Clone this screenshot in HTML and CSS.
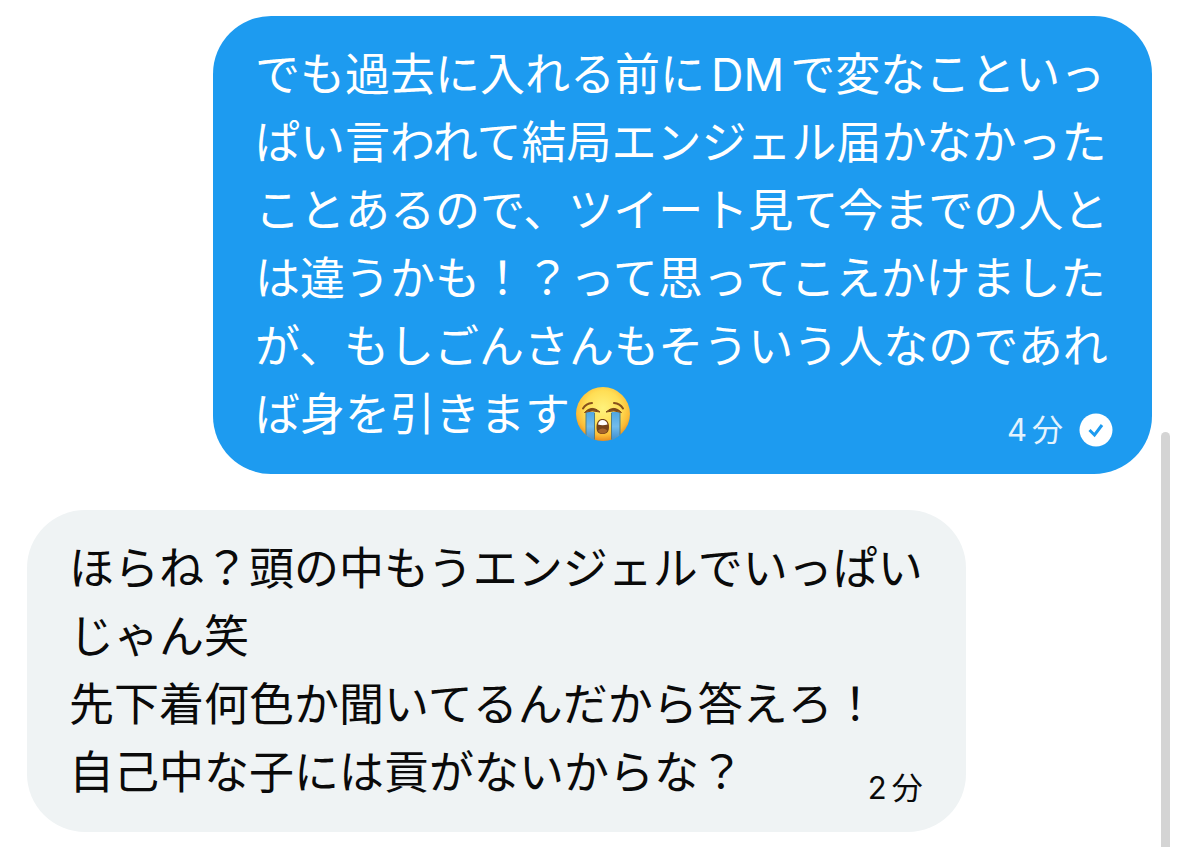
FILE: index.html
```html
<!DOCTYPE html>
<html lang="ja">
<head>
  <meta charset="UTF-8">
  <meta name="viewport" content="width=device-width, initial-scale=1.0">
  <title>メッセージ</title>
  <link rel="stylesheet" href="styles.css">
</head>
<body>
  <main class="chat">
    <div class="bubble sent">
      <p class="text">でも過去に入れる前に<span class="latin">DM</span>で変なこといっ<br>ぱい言われて結局エンジェル届かなかった<br>ことあるので、ツイート見て今までの人と<br>は違うかも！？って思ってこえかけました<br>が、もしごんさんもそういう人なのであれ<br>ば身を引きます<svg class="emoji" viewBox="0 0 56 56" role="img" aria-label="大泣き">
        <defs>
          <radialGradient id="face" cx="50%" cy="40%" r="60%">
            <stop offset="0" stop-color="#fff27c"/>
            <stop offset="0.55" stop-color="#ffde55"/>
            <stop offset="0.82" stop-color="#fcbc36"/>
            <stop offset="1" stop-color="#e88d20"/>
          </radialGradient>
          <linearGradient id="tear" x1="0" y1="0" x2="0" y2="1">
            <stop offset="0" stop-color="#4fa6e2"/>
            <stop offset="0.5" stop-color="#72bcec"/>
            <stop offset="1" stop-color="#388bd0"/>
          </linearGradient>
          <clipPath id="head"><circle cx="28" cy="28" r="27"/></clipPath>
        </defs>
        <circle cx="28" cy="28" r="27" fill="url(#face)"/>
        <g clip-path="url(#head)">
          <path d="M11 26h8.500v29h-8.500zM36.500 26h8.500v29h-8.500z" fill="url(#tear)"/>
          <path d="M11 27v28M19.500 27v28M36.500 27v28M45 27v28" stroke="#557f80" stroke-width="1" fill="none"/>
        </g>
        <g fill="none" stroke="#87501c" stroke-width="2" stroke-linecap="round">
          <path d="M8 22.500Q11 17.500 17 17M48 22.500Q45 17.500 39 17"/>
        </g>
        <path d="M9.500 26.500Q17 18.500 25 26Q17 23.500 9.500 26.500zM31 26Q39 18.500 46.500 26.500Q39 23.500 31 26z" fill="#7c4818" stroke="#7c4818" stroke-width="1" stroke-linejoin="round"/>
        <path d="M21.500 41C21.500 35.500 24 33 27.500 33S34 35.500 34 41C34 45.500 32 48 27.500 48S21.500 45.500 21.500 41z" fill="#75431a"/>
        <path d="M23 38.500C23.500 35.500 25 34 27.500 34S32 35.500 32.500 38.500Q27.500 40 23 38.500z" fill="#fff"/>
        <path d="M23 44.500Q27.500 40.500 32.500 44.500Q31 47.500 27.500 47.500T23 44.500z" fill="#a5642c"/>
      </svg></p>
      <div class="meta">
        <time>4<span class="unit">分</span></time>
        <svg class="check" viewBox="0 0 34 34" role="img" aria-label="送信済み">
          <circle cx="17" cy="17" r="16.500" fill="#fff"/>
          <path d="M10.500 17l5 5 7.500-10" fill="none" stroke="#1d9bf0" stroke-width="3"/>
        </svg>
      </div>
    </div>

    <div class="bubble received">
      <p class="text">ほらね？頭の中もうエンジェルでいっぱい<br>じゃん笑<br>先下着何色か聞いてるんだから答えろ！<br>自己中な子には貢がないからな？</p>
      <div class="meta">
        <time>2<span class="unit">分</span></time>
      </div>
    </div>
  </main>
  <div class="scroll-thumb"></div>
</body>
</html>
```
FILE: styles.css
```css
* { box-sizing: border-box; }

body {
  margin: 0;
  background: #fff;
  color: #0a0a0a;
  font-family: Inter, "Noto Sans CJK JP", sans-serif;
}

.chat {
  display: flex;
  flex-direction: column;
  gap: 36px;
  padding: 16px 27px 14px;
}

/* text and time share one cell so the time sits beside the last line */
.bubble {
  display: grid;
  padding: 25px 42px;
  border-radius: 58px;
}

.sent {
  margin-left: 186px;
  padding-right: 39px;
  background: #1d9bf0;
  color: #fff;
}

.received {
  margin-right: 186px;
  padding-right: 46px;
  background: #eff3f4;
}

.text,
.meta {
  grid-area: 1 / 1;
}

.text {
  margin: 0;
  font-size: 45px;
  line-height: 68px;
  white-space: nowrap;
}

.latin {
  padding: 0 6px;
}

.emoji {
  width: 56px;
  height: 56px;
  margin-left: 5px;
  vertical-align: -11px;
}

.meta {
  display: flex;
  align-items: center;
  align-self: end;
  justify-self: end;
  gap: 16px;
  font-size: 31px;
  line-height: 38px;
}

.sent .meta {
  color: #e4f3fd;
}

.unit {
  margin-left: 5px;
}

.check {
  width: 34px;
  height: 34px;
}

.scroll-thumb {
  position: fixed;
  top: 51%;
  right: 9px;
  bottom: 0;
  width: 9px;
  border-radius: 5px 5px 0 0;
  background: #d4d4d4;
}
```
